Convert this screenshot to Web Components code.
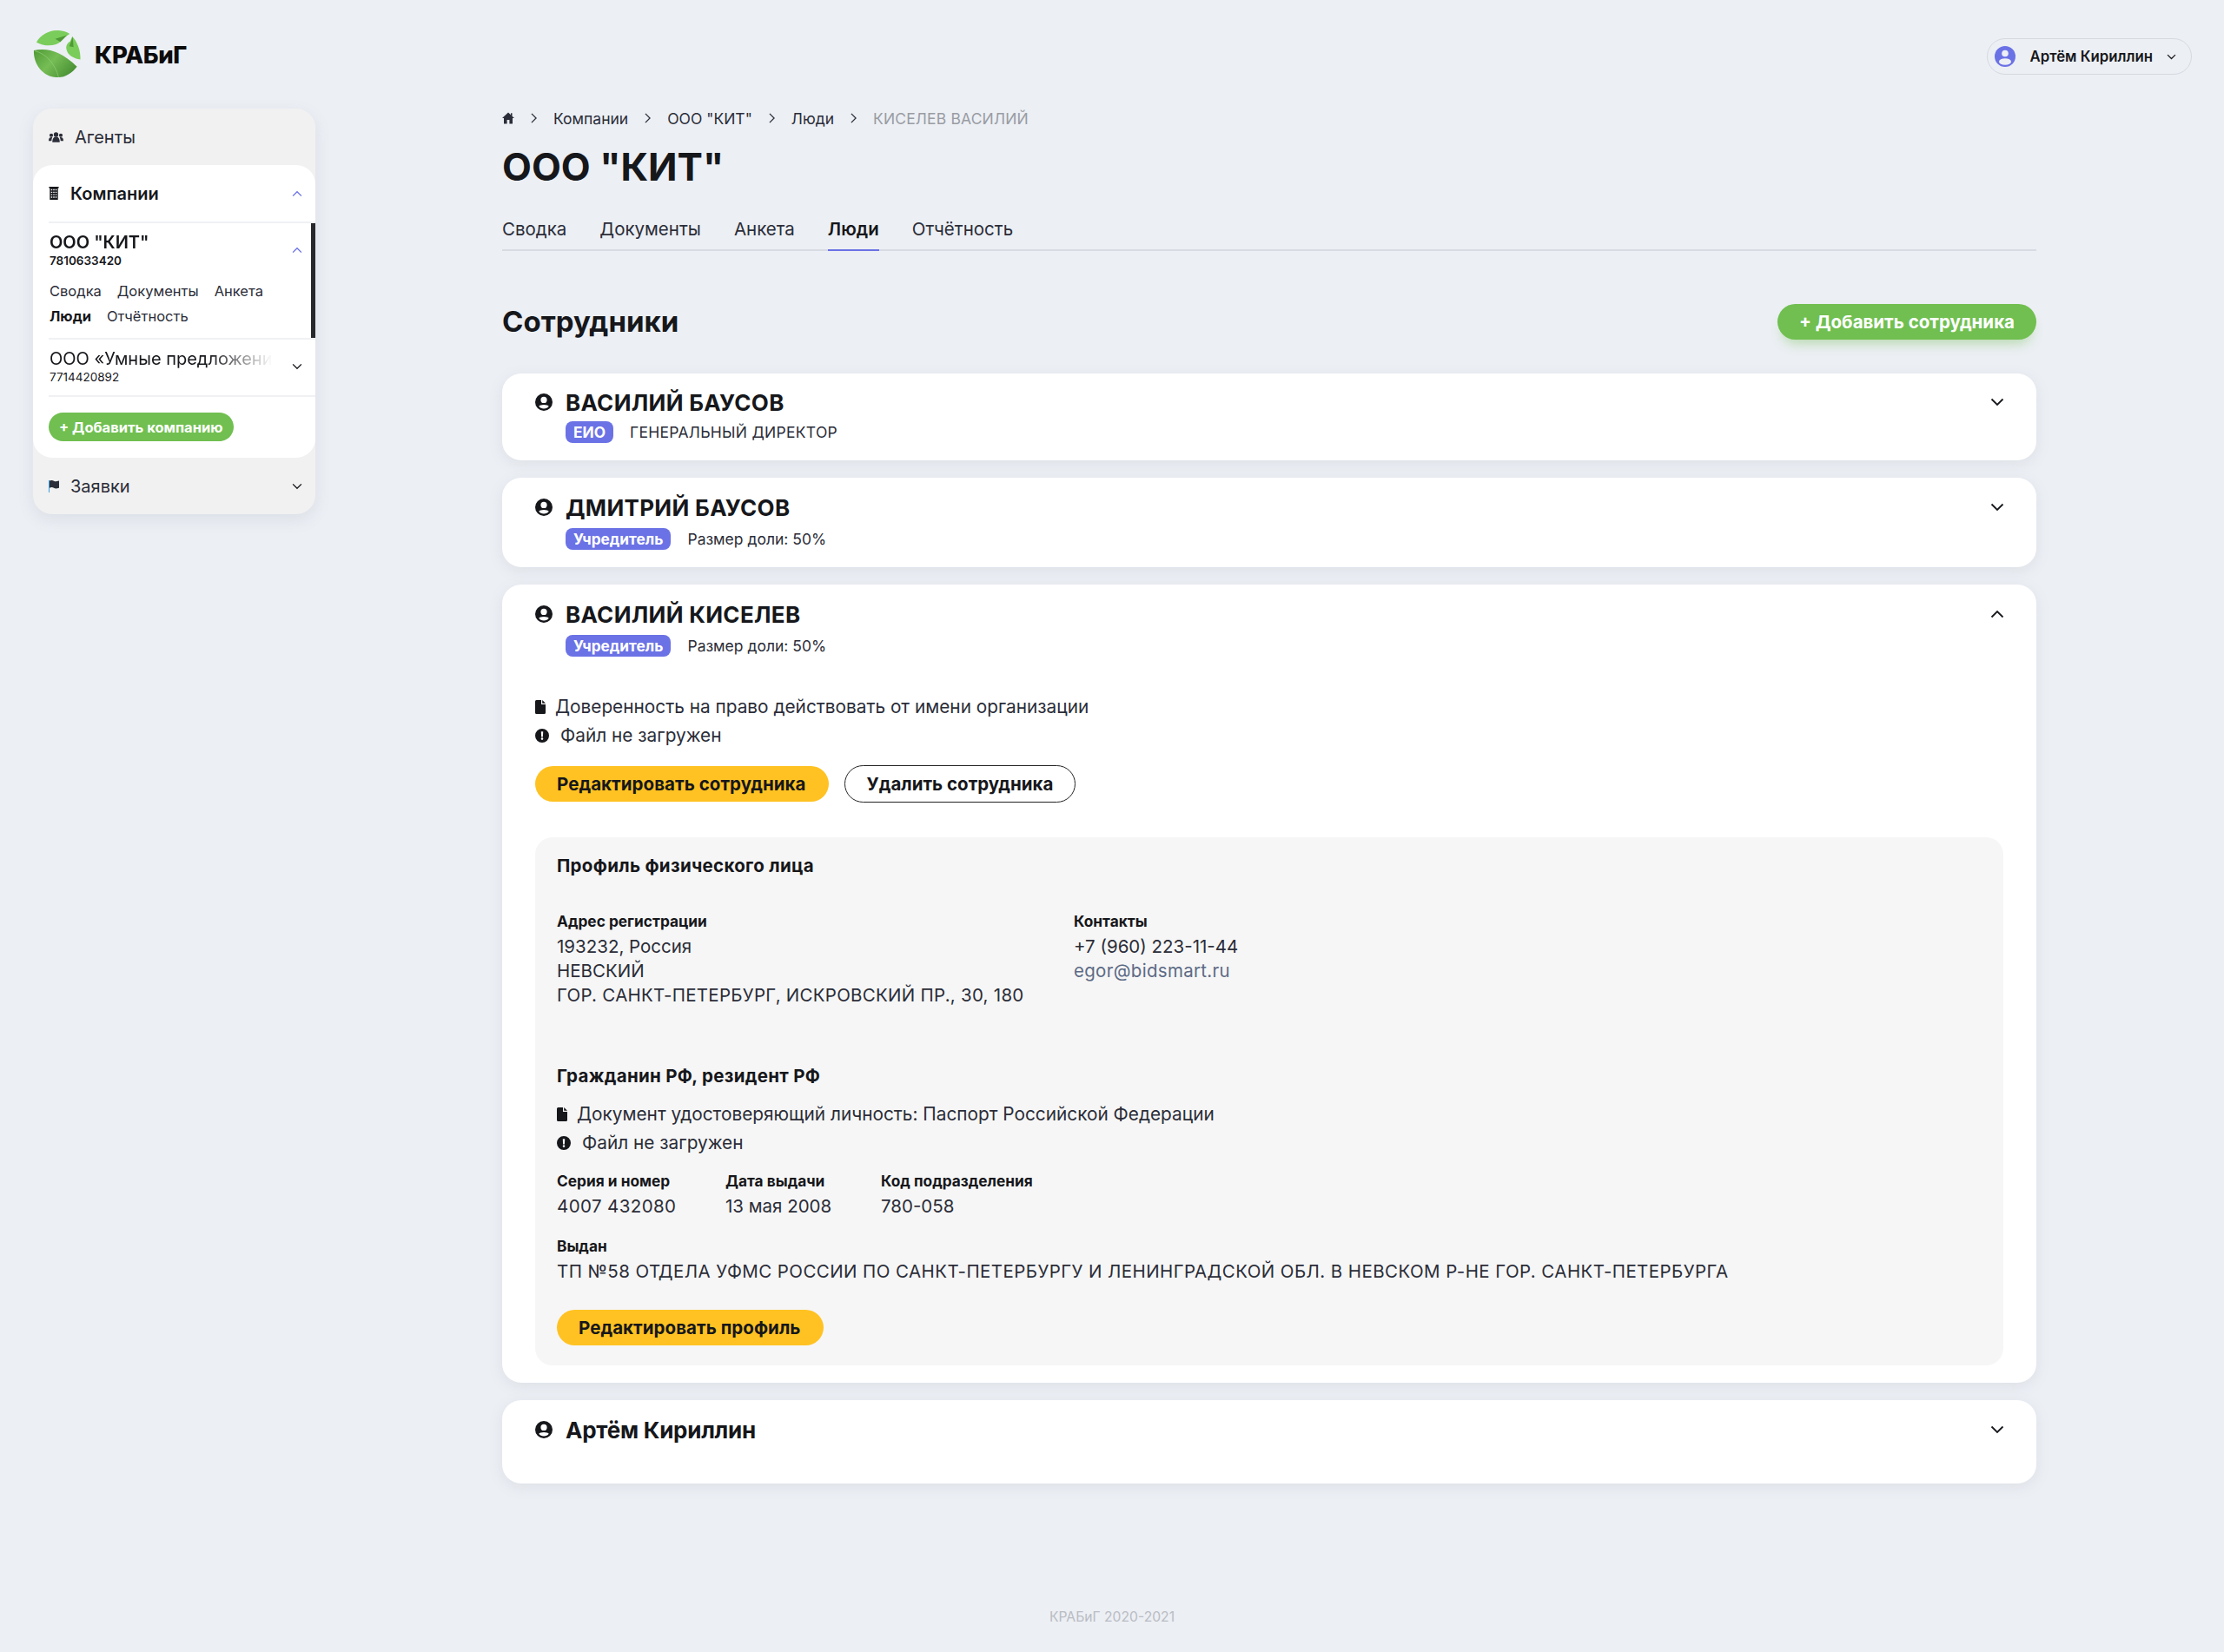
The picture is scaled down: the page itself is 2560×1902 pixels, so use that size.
<!DOCTYPE html>
<html lang="ru">
<head>
<meta charset="UTF-8">
<title>КРАБиГ</title>
<style>
  body { margin: 0; background: #eceff4; color: #16171b; font-family: Inter, "Noto Sans", sans-serif; }
</style>
</head>
<body>

<page-layout>
  <brand-logo slot="logo"></brand-logo>
  <user-pill slot="user">Артём Кириллин</user-pill>

  <side-nav slot="nav">
    <side-item gap="13">
      <app-icon slot="icon" name="team" w="17" h="12"></app-icon>
      <span slot="title">Агенты</span>
    </side-item>
    <side-item open arrow="up" gap="13">
      <app-icon slot="icon" name="building" w="12" h="15"></app-icon>
      <span slot="title">Компании</span>
      <side-company open title-text='ООО "КИТ"' inn="7810633420">
        <side-links><span>Сводка</span><span>Документы</span><span>Анкета</span><b>Люди</b><span>Отчётность</span></side-links>
      </side-company>
      <side-company title-text="ООО «Умные предложения»" inn="7714420892"></side-company>
      <div style="border-top:2px solid #f0f1f3;padding:18px 0 19px;display:flex"><pill-btn kind="small">+ Добавить компанию</pill-btn></div>
    </side-item>
    <side-item arrow="down" gap="13">
      <app-icon slot="icon" name="flag" w="12" h="14"></app-icon>
      <span slot="title">Заявки</span>
    </side-item>
  </side-nav>

  <people-view slot="main">
    <div slot="top">
      <crumb-bar>
        <span><app-icon name="home" w="14" h="14"></app-icon></span><span class="sep"><app-icon name="next" w="7" h="12"></app-icon></span>
        <span>Компании</span><span class="sep"><app-icon name="next" w="7" h="12"></app-icon></span>
        <span>ООО "КИТ"</span><span class="sep"><app-icon name="next" w="7" h="12"></app-icon></span>
        <span>Люди</span><span class="sep"><app-icon name="next" w="7" h="12"></app-icon></span>
        <span class="last">КИСЕЛЕВ ВАСИЛИЙ</span>
      </crumb-bar>
      <h1 style="margin:17px 0 31px;font-size:44px;line-height:56px;font-weight:700;color:#16171b">ООО "КИТ"</h1>
      <tab-bar><span>Сводка</span><span>Документы</span><span>Анкета</span><span class="on">Люди</span><span>Отчётность</span></tab-bar>
    </div>
    <pill-btn slot="action" kind="green">+ Добавить сотрудника</pill-btn>

    <person-card caps name="ВАСИЛИЙ БАУСОВ" badge="ЕИО" note="ГЕНЕРАЛЬНЫЙ ДИРЕКТОР"></person-card>
    <person-card caps roomy name="ДМИТРИЙ БАУСОВ" badge="Учредитель" note="Размер доли: 50%"></person-card>
    <person-card caps roomy open name="ВАСИЛИЙ КИСЕЛЕВ" badge="Учредитель" note="Размер доли: 50%">
      <file-row>Доверенность на право действовать от имени организации</file-row>
      <file-row alert>Файл не загружен</file-row>
      <div style="display:flex;align-items:center;gap:18px;margin-top:18px">
        <pill-btn>Редактировать сотрудника</pill-btn>
        <pill-btn kind="outline">Удалить сотрудника</pill-btn>
      </div>
      <profile-panel>
        <h3>Профиль физического лица</h3>
        <div style="display:grid;grid-template-columns:595px 1fr;margin-top:37px">
          <info-field label="Адрес регистрации"><span>193232, Россия</span><span>НЕВСКИЙ</span><span style="letter-spacing:.26px">ГОР. САНКТ-ПЕТЕРБУРГ, ИСКРОВСКИЙ ПР., 30, 180</span></info-field>
          <info-field label="Контакты"><span>+7 (960) 223-11-44</span><a href="#">egor@bidsmart.ru</a></info-field>
        </div>
        <h3 style="margin-top:66px;margin-bottom:14px">Гражданин РФ, резидент РФ</h3>
        <file-row>Документ удостоверяющий личность: Паспорт Российской Федерации</file-row>
        <file-row alert>Файл не загружен</file-row>
        <div style="display:grid;grid-template-columns:194px 179px auto;margin-top:14px">
          <info-field label="Серия и номер"><span style="letter-spacing:.4px">4007 432080</span></info-field>
          <info-field label="Дата выдачи">13 мая 2008</info-field>
          <info-field label="Код подразделения">780-058</info-field>
        </div>
        <info-field label="Выдан" style="margin-top:18px"><span style="letter-spacing:.42px">ТП №58 ОТДЕЛА УФМС РОССИИ ПО САНКТ-ПЕТЕРБУРГУ И ЛЕНИНГРАДСКОЙ ОБЛ. В НЕВСКОМ Р-НЕ ГОР. САНКТ-ПЕТЕРБУРГА</span></info-field>
        <div style="display:flex;margin-top:30px"><pill-btn>Редактировать профиль</pill-btn></div>
      </profile-panel>
    </person-card>
    <person-card empty roomy name="Артём Кириллин"></person-card>
  </people-view>

  <span slot="footer">КРАБиГ 2020-2021</span>
</page-layout>

<script>
// иконки — общий набор
const ICONS = {
  home: '<svg viewBox="0 0 14 14"><path d="M7 0.5 0 7h2v6.5h3.6V9h2.8v4.5H12V7h2L11.5 4.7V1.2H10v2.1z"/></svg>',
  team: '<svg viewBox="0 0 18 12"><circle cx="9" cy="2.800" r="2.800"/><path d="M4.500 12C4.500 7.500 6.300 5.500 9 5.500s4.500 2 4.500 6.500z"/><circle cx="3.200" cy="3.600" r="2.200"/><path d="M0 10.500C0 7 1.200 6 3.200 6c.5 0 1 .1 1.300.3C3.800 7.500 3.500 8.800 3.500 10.500z"/><circle cx="14.800" cy="3.600" r="2.200"/><path d="M18 10.500C18 7 16.800 6 14.800 6c-.5 0-1 .1-1.300.3.7 1.200 1 2.500 1 4.200z"/></svg>',
  building: '<svg viewBox="0 0 12 16"><path fill-rule="evenodd" d="M0 0h12v1.500H11V16H1V1.500H0zM2.500 3v1.500h1.600V3zm2.700 0v1.500h1.600V3zm2.700 0v1.500h1.600V3zM2.500 6v1.500h1.600V6zm2.700 0v1.500h1.600V6zm2.700 0v1.500h1.600V6zM2.500 9v1.500h1.600V9zm2.700 0v1.500h1.600V9zm2.700 0v1.500h1.600V9zM2.500 12v1.500h1.600V12zm2.700 0v1.500h1.600V12zm2.700 0v1.500h1.600V12z"/></svg>',
  flag: '<svg viewBox="0 0 12 14"><path d="M0 0h1v14H0z" fill="#3aa0e0"/><path d="M1 .5c2-.8 3.500-.6 5 .2s3 .7 6-.2v8.300c-3 .8-4.500.8-6 0s-3-1-5 0z"/></svg>',
  person: '<svg viewBox="0 0 20 20"><path fill-rule="evenodd" d="M10 0a10 10 0 1 0 0 20 10 10 0 0 0 0-20zm0 3.800a3.600 3.600 0 1 1 0 7.200 3.600 3.600 0 0 1 0-7.200zm0 13.700c-2.400 0-4.500-1-5.700-2.700.5-1.100 3-1.800 5.700-1.800s5.200.7 5.700 1.800c-1.200 1.700-3.300 2.700-5.700 2.700z"/></svg>',
  file: '<svg viewBox="0 0 12 16"><path d="M1.500 0H7v5h5v9.500a1.500 1.500 0 0 1-1.500 1.500h-9A1.500 1.500 0 0 1 0 14.500v-13A1.500 1.500 0 0 1 1.500 0zM8.200 0 12 3.800H8.200z"/></svg>',
  alert: '<svg viewBox="0 0 16 16"><path fill-rule="evenodd" d="M8 0a8 8 0 1 0 0 16A8 8 0 0 0 8 0zM6.800 3.200h2.400L8.900 9.500H7.100zM8 10.300a1.300 1.300 0 1 1 0 2.600 1.300 1.300 0 0 1 0-2.600z"/></svg>',
  avatar: '<svg viewBox="0 0 24 24"><circle cx="12" cy="12" r="12" fill="#6b72e5"/><circle cx="12" cy="8.500" r="3.800" fill="#eceff4"/><ellipse cx="12" cy="18" rx="7" ry="3.800" fill="#eceff4"/></svg>',
  down: '<svg viewBox="0 0 16 10"><path d="M1.500 1.500 8 8l6.500-6.500" fill="none" stroke="currentColor" stroke-width="1.800"/></svg>',
  up: '<svg viewBox="0 0 16 10"><path d="M1.500 8.500 8 2l6.500 6.500" fill="none" stroke="currentColor" stroke-width="1.800"/></svg>',
  next: '<svg viewBox="0 0 8 14"><path d="M1 1l6 6-6 6" fill="none" stroke="currentColor" stroke-width="1.500"/></svg>'
};

class AppIcon extends HTMLElement {
  constructor() {
    super();
    this.attachShadow({ mode: 'open' });
    const w = this.getAttribute('w') || 16;
    const h = this.getAttribute('h') || 16;
    this.shadowRoot.innerHTML = `<style>
      :host { display: inline-flex; flex: none; width: ${w}px; height: ${h}px; fill: currentColor; }
      svg { width: 100%; height: 100%; display: block; }
    </style>${ICONS[this.getAttribute('name')] || ''}`;
  }
}
customElements.define('app-icon', AppIcon);

class BrandLogo extends HTMLElement {
  constructor() {
    super();
    this.attachShadow({ mode: 'open' });
    this.shadowRoot.innerHTML = `<style>
      :host { display: flex; align-items: center; gap: 16px; }
      svg { width: 55px; height: 55px; display: block; }
      span { font-size: 27.500px; font-weight: 800; color: #0c0c0c; letter-spacing: -.4px; }
    </style>
    <svg viewBox="7 7 56 56">
      <defs>
        <linearGradient id="lg" x1="0" y1="0" x2="1" y2=".6"><stop offset="0" stop-color="#4f9a36"/><stop offset=".5" stop-color="#76bd55"/><stop offset="1" stop-color="#4b9336"/></linearGradient>
      </defs>
      <path fill="#7acd5a" d="M11 21C16 11 28 6.500 37 7c5 .3 10 2 13 4l-5 3.500L39 20.500C33 26 20 26 11 21z"/>
      <path fill="#4f9a36" d="M33 17l14-4.500-8 8z"/>
      <path fill="#7acd5a" d="M53 14c6 6 10 17 9.500 27C55 40 47 36 46 28c-.3-3.500 2-7 4.500-8z"/>
      <path fill="#4f9a36" d="M49.500 25.500 53.500 14.500 54.500 26.500z"/>
      <path fill="url(#lg)" d="M8 30.500C23 27 40 31 58.500 49.500 53 57 44 62.500 36 62 20 63 7 47 8 30.500z"/>
      <path fill="none" stroke="#9ad47e" stroke-width=".6" d="M9 31c13 3 24 15 28 31"/>
    </svg>
    <span>КРАБиГ</span>`;
  }
}
customElements.define('brand-logo', BrandLogo);

class UserPill extends HTMLElement {
  constructor() {
    super();
    this.attachShadow({ mode: 'open' });
    this.shadowRoot.innerHTML = `<style>
      :host { display: inline-flex; align-items: center; height: 42px; box-sizing: border-box; padding: 0 17px 0 8px; border: 1px solid #d6d9e0; border-radius: 21px; font-size: 16.800px; font-weight: 600; color: #16171b; }
      .name { margin: 0 16px 0 17px; }
    </style>
    <app-icon name="avatar" w="24" h="24"></app-icon><span class="name"><slot></slot></span><app-icon name="down" w="11" h="7"></app-icon>`;
  }
}
customElements.define('user-pill', UserPill);

class SideItem extends HTMLElement {
  constructor() {
    super();
    this.attachShadow({ mode: 'open' });
    const open = this.hasAttribute('open');
    const arrow = this.getAttribute('arrow');
    this.shadowRoot.innerHTML = `<style>
      :host { display: block; background: ${open ? '#fff' : 'transparent'}; border-radius: ${open ? '22px' : '0'}; padding-left: 18px; }
      .row { display: flex; align-items: center; height: 65px; padding-right: 15px; font-size: 20px; font-weight: ${open ? 600 : 400}; color: ${open ? '#16171b' : '#2b2d38'}; }
      .ic { display: flex; margin-right: ${this.getAttribute('gap') || 12}px; }
      .txt { flex: 1; }
      .arrow { color: ${open ? '#6b72e5' : '#16171b'}; }
    </style>
    <div class="row">
      <span class="ic"><slot name="icon"></slot></span><span class="txt"><slot name="title"></slot></span>
      ${arrow ? `<app-icon class="arrow" name="${arrow}" w="12" h="8"></app-icon>` : ''}
    </div>
    <slot></slot>`;
  }
}
customElements.define('side-item', SideItem);

class SideCompany extends HTMLElement {
  constructor() {
    super();
    this.attachShadow({ mode: 'open' });
    const open = this.hasAttribute('open');
    this.shadowRoot.innerHTML = `<style>
      :host { display: block; position: relative; border-top: 2px solid #f0f1f3; }
      .head { display: flex; align-items: center; padding: 10px 15px 0 1px; }
      .info { flex: 1; min-width: 0; }
      .title { font-size: 20px; line-height: 24px; font-weight: ${open ? 600 : 400}; white-space: nowrap; overflow: hidden; width: 262px;
        -webkit-mask-image: linear-gradient(to right, #000 70%, transparent 98%); mask-image: linear-gradient(to right, #000 70%, transparent 98%); }
      .inn { font-size: 13.500px; line-height: 18px; font-weight: ${open ? 600 : 400}; }
      .arrow { color: ${open ? '#6b72e5' : '#16171b'}; }
      .links { padding: 16px 14px 14px 1px; }
      .bar { position: absolute; right: 0; top: 0; bottom: 0; width: 5px; background: #27282c; }
      :host(:not([open])) { padding-bottom: 12px; }
    </style>
    <div class="head">
      <div class="info"><div class="title">${this.getAttribute('title-text')}</div><div class="inn">${this.getAttribute('inn')}</div></div>
      <app-icon class="arrow" name="${open ? 'up' : 'down'}" w="12" h="8"></app-icon>
    </div>
    ${open ? '<div class="links"><slot></slot></div><div class="bar"></div>' : ''}`;
  }
}
customElements.define('side-company', SideCompany);

class SideLinks extends HTMLElement {
  constructor() {
    super();
    this.attachShadow({ mode: 'open' });
    this.shadowRoot.innerHTML = `<style>
      :host { display: flex; flex-wrap: wrap; column-gap: 18px; row-gap: 8px; width: 290px; font-size: 16.500px; line-height: 21px; color: #2b2d38; }
      ::slotted(b) { font-weight: 700; color: #16171b; }
    </style><slot></slot>`;
  }
}
customElements.define('side-links', SideLinks);

class SideNav extends HTMLElement {
  constructor() {
    super();
    this.attachShadow({ mode: 'open' });
    this.shadowRoot.innerHTML = `<style>
      :host { display: block; width: 325px; background: #f1f1f1; border-radius: 22px; box-shadow: 0 6px 18px rgba(120,130,150,.14); align-self: start; }
    </style><slot></slot>`;
  }
}
customElements.define('side-nav', SideNav);

class PillBtn extends HTMLElement {
  constructor() {
    super();
    this.attachShadow({ mode: 'open' });
    const kind = this.getAttribute('kind') || 'yellow';
    const styles = {
      yellow: 'background:#ffc222;color:#16171b;height:41px;padding:0 26px 0 25px;font-size:20.500px;letter-spacing:.05px;',
      outline: 'background:#fff;color:#16171b;height:43px;padding:0 25px;font-size:20.500px;border:1px solid #222;box-sizing:border-box;',
      green: 'background:#70bf50;color:#fff;height:41px;padding:0 25px;font-size:20.500px;box-shadow:0 10px 14px -6px rgba(112,191,80,.45);',
      small: 'background:#70bf50;color:#fff;height:33px;padding:0 12px;font-size:16.500px;'
    };
    this.shadowRoot.innerHTML = `<style>
      :host { display: inline-flex; align-items: center; border-radius: 22px; font-weight: 700; white-space: nowrap; ${styles[kind]} }
    </style><slot></slot>`;
  }
}
customElements.define('pill-btn', PillBtn);

class CrumbBar extends HTMLElement {
  constructor() {
    super();
    this.attachShadow({ mode: 'open' });
    this.shadowRoot.innerHTML = `<style>
      :host { display: flex; align-items: center; height: 22px; font-size: 17.500px; color: #2b2d38; }
      ::slotted(span) { display: inline-flex; align-items: center; }
      ::slotted(.sep) { margin: 0 19px; }
      ::slotted(.last) { color: #999ca3; letter-spacing: .15px; }
    </style><slot></slot>`;
  }
}
customElements.define('crumb-bar', CrumbBar);

class TabBar extends HTMLElement {
  constructor() {
    super();
    this.attachShadow({ mode: 'open' });
    this.shadowRoot.innerHTML = `<style>
      :host { display: flex; gap: 38px; border-bottom: 2px solid #d8dbe2; font-size: 20.500px; color: #2b2d38; }
      ::slotted(span) { padding-bottom: 10px; margin-bottom: -2px; line-height: 26px; }
      ::slotted(.on) { font-weight: 600; color: #16171b; border-bottom: 2px solid #6b72e5; }
    </style><slot></slot>`;
  }
}
customElements.define('tab-bar', TabBar);

class PersonCard extends HTMLElement {
  constructor() {
    super();
    this.attachShadow({ mode: 'open' });
    const open = this.hasAttribute('open');
    const roomy = this.hasAttribute('roomy');
    const note = this.getAttribute('note') || '';
    // подпись заглавными шире, чем даёт шрифт
    const noteCaps = note === note.toUpperCase();
    this.shadowRoot.innerHTML = `<style>
      :host { display: block; background: #fff; border-radius: 22px; box-shadow: 0 4px 16px rgba(120,130,150,.13); padding: ${roomy ? 21 : 20}px 38px 20px; }
      .top { display: flex; align-items: center; height: 26px; gap: 15px; }
      .name { flex: 1; font-size: 26px; font-weight: 700; color: #16171b; letter-spacing: ${this.hasAttribute('caps') ? '.3px' : '-.25px'}; }
      .chev { margin-right: -1px; }
      .sub { display: flex; align-items: center; gap: 19px; margin: ${roomy ? 11 : 9}px 0 0 35px; font-size: 17.500px; color: #2b2d38; }
      .note { letter-spacing: ${noteCaps ? '.28px' : '0'}; }
      .badge { background: #6b72e5; color: #fff; border-radius: 8px; height: 25px; padding: 0 9px; display: flex; align-items: center; font-weight: 700; font-size: 17.300px; }
      :host([empty]) { padding-bottom: 49px; }
      .body { margin-top: 41px; }
    </style>
    <div class="top">
      <app-icon name="person" w="20" h="20"></app-icon>
      <div class="name">${this.getAttribute('name')}</div>
      <app-icon class="chev" name="${open ? 'up' : 'down'}" w="16" h="10"></app-icon>
    </div>
    ${this.hasAttribute('badge') ? `<div class="sub"><span class="badge">${this.getAttribute('badge')}</span><span class="note">${note}</span></div>` : ''}
    ${open ? '<div class="body"><slot></slot></div>' : ''}`;
  }
}
customElements.define('person-card', PersonCard);

class FileRow extends HTMLElement {
  constructor() {
    super();
    this.attachShadow({ mode: 'open' });
    const alert = this.hasAttribute('alert');
    this.shadowRoot.innerHTML = `<style>
      :host { display: flex; align-items: center; height: 33px; gap: ${alert ? 13 : 11}px; font-size: 20.800px; color: #2b2d38; }
      app-icon { color: #16171b; }
    </style>
    <app-icon name="${alert ? 'alert' : 'file'}" w="${alert ? 16 : 12}" h="16"></app-icon><span><slot></slot></span>`;
  }
}
customElements.define('file-row', FileRow);

class InfoField extends HTMLElement {
  constructor() {
    super();
    this.attachShadow({ mode: 'open' });
    this.shadowRoot.innerHTML = `<style>
      :host { display: block; font-size: 20.500px; line-height: 28px; color: #2b2d38; }
      .label { font-size: 17.300px; font-weight: 700; line-height: 28px; margin-bottom: 1px; color: #16171b; }
      ::slotted(a) { color: #5c6a85; text-decoration: none; letter-spacing: .3px; }
      ::slotted(span) { display: block; }
    </style>
    <div class="label">${this.getAttribute('label')}</div><slot></slot>`;
  }
}
customElements.define('info-field', InfoField);

class ProfilePanel extends HTMLElement {
  constructor() {
    super();
    this.attachShadow({ mode: 'open' });
    this.shadowRoot.innerHTML = `<style>
      :host { display: block; background: #f6f6f6; border-radius: 20px; padding: 20px 25px 23px; margin-top: 40px; }
      ::slotted(h3) { margin: 0; font-size: 20.500px; line-height: 26px; font-weight: 700; color: #16171b; letter-spacing: .3px; }
    </style><slot></slot>`;
  }
}
customElements.define('profile-panel', ProfilePanel);

class PeopleView extends HTMLElement {
  constructor() {
    super();
    this.attachShadow({ mode: 'open' });
    this.shadowRoot.innerHTML = `<style>
      :host { display: block; width: 1766px; }
      .head { display: flex; justify-content: space-between; align-items: center; height: 42px; margin: 60px 0 39px; }
      h2 { margin: 0; font-size: 33px; font-weight: 700; color: #16171b; }
      .list { display: flex; flex-direction: column; gap: 20px; }
    </style>
    <slot name="top"></slot>
    <div class="head"><h2>Сотрудники</h2><slot name="action"></slot></div>
    <div class="list"><slot></slot></div>`;
  }
}
customElements.define('people-view', PeopleView);

class PageLayout extends HTMLElement {
  constructor() {
    super();
    this.attachShadow({ mode: 'open' });
    this.shadowRoot.innerHTML = `<style>
      :host { display: flex; flex-direction: column; height: 1902px; box-sizing: border-box; }
      header { display: flex; justify-content: space-between; align-items: flex-start; height: 125px; box-sizing: border-box; padding: 35px 37px 0 38px; }
      .pill { margin-top: 9px; display: block; }
      .cols { display: grid; grid-template-columns: 325px 1766px; column-gap: 215px; padding-left: 38px; flex: 1; }
      footer { text-align: center; font-size: 15.700px; color: #b9bcc3; padding-bottom: 31px; }
    </style>
    <header><slot name="logo"></slot><span class="pill"><slot name="user"></slot></span></header>
    <div class="cols"><slot name="nav"></slot><slot name="main"></slot></div>
    <footer><slot name="footer"></slot></footer>`;
  }
}
customElements.define('page-layout', PageLayout);
</script>
</body>
</html>
